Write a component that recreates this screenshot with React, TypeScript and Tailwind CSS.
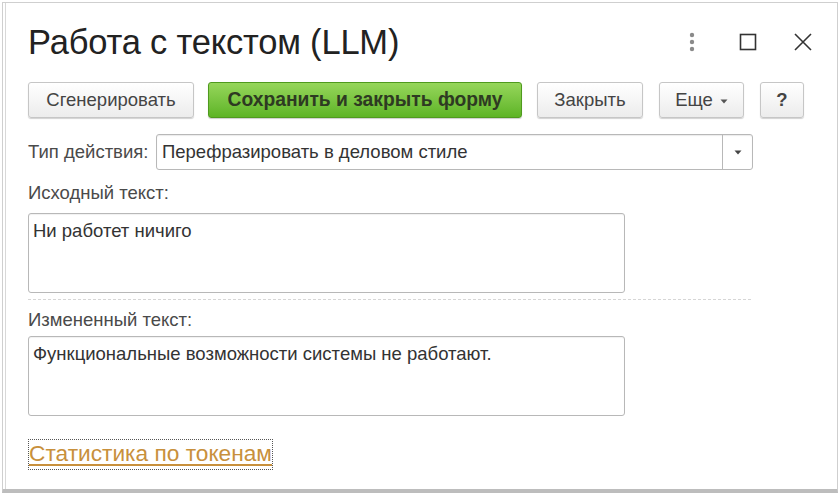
import React from "react";

const F = { fontFamily: '"Liberation Sans", Arial, sans-serif' };

function Btn({ children, className = "" }: { children: React.ReactNode; className?: string }) {
  return (
    <div
      className={
        "h-[36px] flex items-center justify-center rounded-[3px] border border-[#c6c6c6] bg-gradient-to-b from-[#ffffff] to-[#ececec] shadow-[0_1px_1px_rgba(0,0,0,0.18)] text-[18.5px] text-[#444] " +
        className
      }
    >
      {children}
    </div>
  );
}

export default function App() {
  return (
    <div className="w-[840px] h-[496px] bg-white" style={F}>
      <div className="ml-[2px] mt-[2px] w-[836px] h-[491px] border border-[#cfcfcf] border-b-[4px] border-b-[#bdbdbd] bg-white">
        <div className="h-full border-l border-[#d8d8d8] ml-[2px] flex flex-col pl-[22px]">
          {/* Title */}
          <div className="flex items-center h-[74px] pt-[4px]">
            <div className="text-[34.5px] text-[#222] tracking-[-0.2px] leading-[40px]">Работа с текстом (LLM)</div>
            <div className="ml-auto flex items-center mr-[24px]">
              <svg width="6" height="20" viewBox="0 0 6 20" className="mr-[44px]">
                <circle cx="3" cy="3" r="2.2" fill="#8a8a8a" />
                <circle cx="3" cy="10" r="2.2" fill="#8a8a8a" />
                <circle cx="3" cy="17" r="2.2" fill="#8a8a8a" />
              </svg>
              <svg width="18" height="18" viewBox="0 0 18 18" className="mr-[36px]">
                <rect x="1.5" y="1.5" width="15" height="15" fill="none" stroke="#333" strokeWidth="1.6" />
              </svg>
              <svg width="20" height="20" viewBox="0 0 20 20">
                <path d="M2 2 L18 18 M18 2 L2 18" stroke="#333" strokeWidth="1.6" />
              </svg>
            </div>
          </div>
          {/* Buttons */}
          <div className="flex items-center mt-[4px] h-[38px]">
            <Btn className="w-[166px]">Сгенерировать</Btn>
            <div className="ml-[14px] w-[314px] h-[36px] flex items-center justify-center rounded-[3px] border border-[#4f9a1e] bg-gradient-to-b from-[#96d65a] to-[#5db424] shadow-[0_1px_1px_rgba(0,0,0,0.2)] text-[19.3px] font-bold text-[#2e3a22]">
              Сохранить и закрыть форму
            </div>
            <Btn className="ml-[15px] w-[106px]">Закрыть</Btn>
            <Btn className="ml-[16px] w-[85px]">
              <span>Еще</span>
              <svg width="8" height="5" viewBox="0 0 8 5" className="ml-[7px] mt-[2px]">
                <path d="M0.5 0.5 H7.5 L4 4.5 Z" fill="#555" />
              </svg>
            </Btn>
            <Btn className="ml-[16px] w-[44px] font-bold text-[#222]">?</Btn>
          </div>
          {/* Type */}
          <div className="flex items-center mt-[15px] h-[36px]">
            <div className="w-[128px] text-[18.5px] text-[#4a4a4a]">Тип действия:</div>
            <div className="w-[597px] h-[36px] flex items-stretch rounded-[3px] border border-[#b8b8b8] shadow-[inset_0_1px_1px_rgba(0,0,0,0.08)]">
              <div className="flex-1 flex items-center pl-[5px] text-[18.5px] text-[#333]">Перефразировать в деловом стиле</div>
              <div className="w-[30px] border-l border-[#b8b8b8] flex items-center justify-center">
                <svg width="8" height="5" viewBox="0 0 8 5">
                  <path d="M0.5 0.5 H7.5 L4 4.5 Z" fill="#444" />
                </svg>
              </div>
            </div>
          </div>
          {/* Source */}
          <div className="mt-[13px] text-[18.5px] text-[#4a4a4a] leading-[20px]">Исходный текст:</div>
          <div className="mt-[10px] w-[597px] h-[80px] rounded-[3px] border border-[#b8b8b8] px-[4px] pt-[7px] text-[18.5px] text-[#333] leading-[20px] shadow-[inset_0_1px_1px_rgba(0,0,0,0.06)]">
            Ни работет ничиго
          </div>
          <div className="mt-[6px] w-[723px] border-t border-dashed border-[#d6d6d6]" />
          {/* Result */}
          <div className="mt-[10px] text-[18.5px] text-[#4a4a4a] leading-[20px]">Измененный текст:</div>
          <div className="mt-[6px] w-[597px] h-[80px] rounded-[3px] border border-[#b8b8b8] px-[4px] pt-[7px] text-[18.5px] text-[#333] leading-[20px] shadow-[inset_0_1px_1px_rgba(0,0,0,0.06)]">
            Функциональные возможности системы не работают.
          </div>
          <div className="mt-[23px] self-start border border-dotted border-[#555] leading-[26px]">
            <span className="text-[22.7px] text-[#c8903c] underline decoration-[#c8903c] underline-offset-[3px]">Статистика по токенам</span>
          </div>
        </div>
      </div>
    </div>
  );
}
